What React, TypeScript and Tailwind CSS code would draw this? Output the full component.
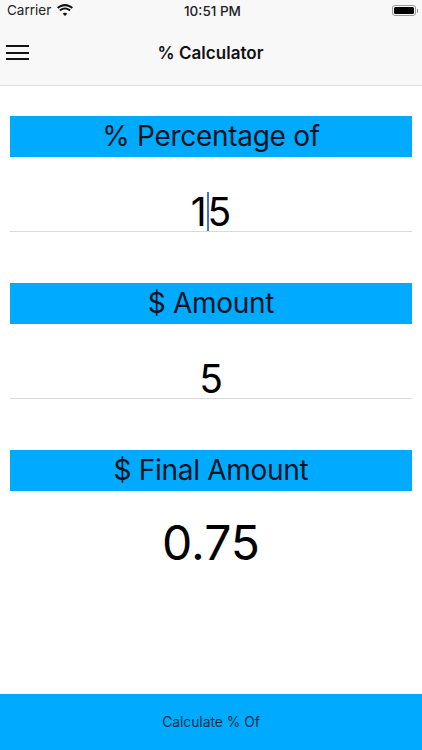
import React from "react";

function Header({ children }: { children: React.ReactNode }) {
  return (
    <div className="h-[41px] pb-[2px] bg-[#00abff] flex items-center justify-center text-[28px] tracking-[-0.3px] leading-none text-[#03141f]">
      {children}
    </div>
  );
}

export default function App() {
  return (
    <div className="w-[422px] h-[750px] bg-white flex flex-col overflow-hidden font-['Inter',sans-serif] text-black">
      <div className="h-[86px] bg-[#f8f8f8] border-b border-[#e0e0e0] flex flex-col shrink-0">
        <div className="h-[21px] relative flex items-center px-[7px] text-[13.5px] text-[#222]">
          <span>Carrier</span>
          <svg className="ml-[6px] -mt-[1px]" width="16" height="12" viewBox="0 0 16 12" fill="#111">
            <path d="M8 2.2c2.6 0 4.9 1 6.6 2.6L16 3.3C13.9 1.3 11.1 0 8 0S2.1 1.3 0 3.300l1.400 1.500C3.100 3.200 5.400 2.200 8 2.200z" />
            <path d="M8 5.600c1.700 0 3.200.7 4.300 1.700l1.500-1.500C12.300 4.400 10.200 3.400 8 3.400s-4.300 1-5.800 2.400l1.500 1.500C4.800 6.300 6.300 5.600 8 5.600z" />
            <path d="M8 8.800c-.9 0-1.700.4-2.300 1L8 12l2.300-2.200c-.6-.6-1.400-1-2.300-1z" />
          </svg>
          <span className="absolute left-[184px] top-[1px] font-medium">10:51 PM</span>
          <div className="absolute left-[392px] top-[5px] flex items-center">
            <div className="w-[24px] h-[11px] rounded-[3px] border border-[#999] p-[1px]">
              <div className="w-full h-full rounded-[1.5px] bg-black" />
            </div>
            <div className="w-[1px] h-[4px] bg-[#999] ml-[1px]" />
          </div>
        </div>
        <div className="flex-1 relative flex items-center justify-center pt-[2px]">
          <div className="absolute left-[6px] top-[24px] w-[23px] flex flex-col gap-[4.5px]">
            <div className="h-[2px] bg-[#111]" />
            <div className="h-[2px] bg-[#111]" />
            <div className="h-[2px] bg-[#111]" />
          </div>
          <span className="text-[17px] font-semibold text-[#111] tracking-[0.05px] -ml-[1px]">% Calculator</span>
        </div>
      </div>

      <div className="flex-1 flex flex-col px-[10px] pt-[30px]">
        <Header>% Percentage of</Header>
        <div className="h-[75px] border-b border-[#d9d9d9] flex items-center justify-center pt-[35px] text-[39px] leading-none relative">
          <span>1</span>
          <span className="w-[2px] h-[39px] bg-[#4a6fd0] mx-[-0.5px] translate-x-[1px]" />
          <span>5</span>
        </div>
        <div className="h-[51px] shrink-0" />
        <Header>$ Amount</Header>
        <div className="h-[75px] border-b border-[#d9d9d9] flex items-center justify-center pt-[35px] text-[39px] leading-none">
          5
        </div>
        <div className="h-[51px] shrink-0" />
        <Header>$ Final Amount</Header>
        <div className="flex justify-center pt-[24px] text-[48px] leading-[56px]">0.75</div>
      </div>

      <div className="h-[56px] bg-[#00abff] flex items-center justify-center text-[13.8px] text-[#06304a] shrink-0">
        Calculate % Of
      </div>
    </div>
  );
}
